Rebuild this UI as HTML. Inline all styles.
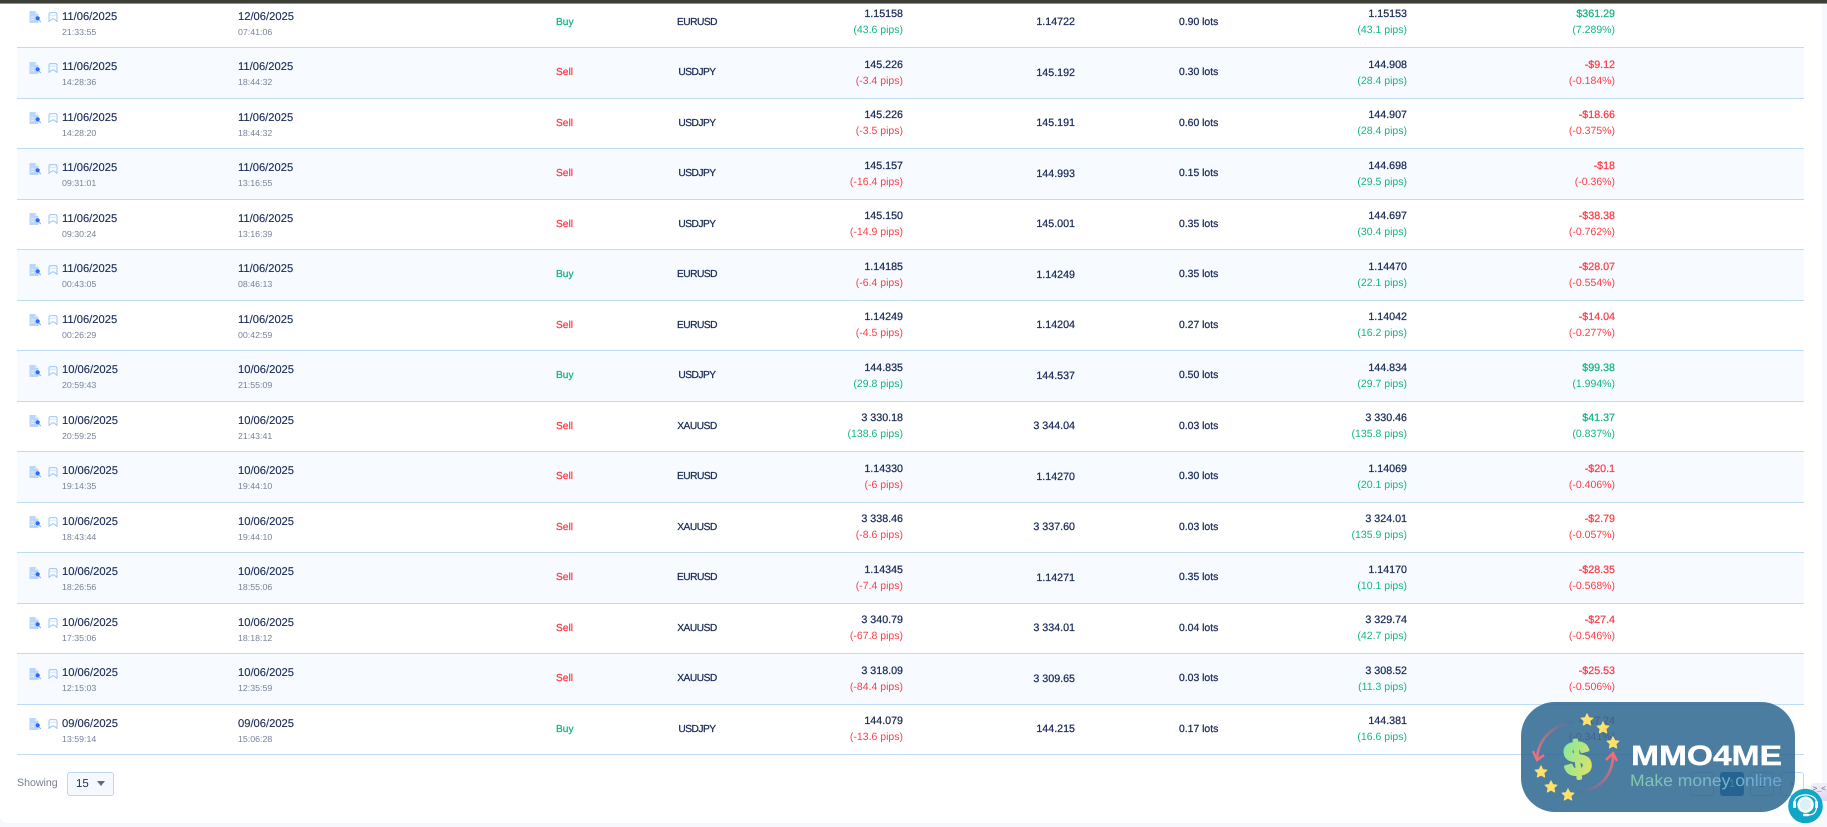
<!DOCTYPE html>
<html><head><meta charset="utf-8"><style>
html,body{margin:0;padding:0;width:1827px;height:827px;overflow:hidden;background:#f6f8fd;font-family:"Liberation Sans",sans-serif;color:#1a2a58;text-rendering:geometricPrecision}
#card{position:absolute;left:0;top:0;width:1822px;height:823px;background:#fff;border-radius:0 0 8px 8px;overflow:hidden}
#bar{position:absolute;left:0;top:0;width:1827px;height:3px;background:#3b3f35;border-bottom:1px solid #8d8f88;z-index:5}
.r{position:absolute;left:17px;width:1787px;height:50.5px;box-sizing:border-box;border-bottom:1px solid #bfdcf5}
.e{background:#f7fbff}
.r span,.r svg{position:absolute;white-space:nowrap;line-height:14px}
.i1{left:12px;top:13.5px;width:12px;height:12px}
.i2{left:31px;top:14.5px;width:10px;height:10px}
.d{left:45px;top:12px;font-size:11.2px;-webkit-text-stroke:.12px}
.c{left:221px;top:12px;font-size:11.2px;-webkit-text-stroke:.12px}
.t{left:45px;top:27px;font-size:8.8px;color:#7a8399}
.u{left:221px;top:27px;font-size:8.8px;color:#7a8399}
.s{left:539px;top:18px;font-size:10.2px;-webkit-text-stroke:.25px}
.m{left:680px;transform:translateX(-50%);top:18px;font-size:10.2px;letter-spacing:-.5px;-webkit-text-stroke:.25px;color:#1a2a58}
.o1,.o2,.c1,.c2,.p1,.p2{text-align:right}
.o1{right:901px;top:9.5px;font-size:10.7px;-webkit-text-stroke:.25px}
.o2{right:901px;top:25.5px;font-size:10.5px}
.x{right:729px;top:17.5px;font-size:10.7px;-webkit-text-stroke:.25px}
.l{left:1162px;top:18px;font-size:10.4px;-webkit-text-stroke:.25px}
.c1{right:397px;top:9.5px;font-size:10.7px;-webkit-text-stroke:.25px}
.c2{right:397px;top:25.5px;font-size:10.5px}
.p1{right:189px;top:9.5px;font-size:10.7px;-webkit-text-stroke:.25px}
.p2{right:189px;top:25.5px;font-size:10.5px}
.r .g{color:#12b584}.r .b{color:#ff3b47}
#sh{position:absolute;left:17px;top:776px;font-size:10.6px;line-height:14px;color:#77808f}
#sel{position:absolute;left:67px;top:772px;width:47px;height:24px;box-sizing:border-box;background:#f5f9ff;border:1px solid #bcd7f2;border-radius:3px}
#sel b{position:absolute;left:8px;top:4px;font-weight:normal;font-size:11.5px;line-height:14px}
#sel i{position:absolute;left:29px;top:8px;width:0;height:0;border-left:4.5px solid transparent;border-right:4.5px solid transparent;border-top:5px solid #5c6b85}
.pg{position:absolute;top:772px;width:24px;height:24px;box-sizing:border-box;border:1px solid #bcd7f2;border-radius:3px;font-size:11px;line-height:22px;text-align:center;color:#5c6b85}
#tab{position:absolute;left:1811px;top:783px;width:16px;height:18px;background:linear-gradient(#f1f0f8,#ddd4f3);border-radius:3px 0 0 3px;font-size:8px;line-height:14px;text-align:center;color:#667;font-family:"Liberation Mono",monospace;letter-spacing:-.5px}
#ov{position:absolute;left:0;top:0;z-index:8}
</style></head><body>
<svg width="0" height="0" style="position:absolute"><defs>
<symbol id="a" viewBox="0 0 12 12"><path d="M0.5 0H6.5L9.5 3V12H0.5Z" fill="#bcd6fb"/><path d="M6.5 0V3H9.5Z" fill="#e4eefd"/><path d="M2 6H5.5M2 8.5H5" stroke="#e4eefd" stroke-width="1"/><circle cx="8.7" cy="7.3" r="2.1" fill="#2c6df0"/><path d="M10 9L11.8 11" stroke="#7ea8ee" stroke-width="1"/></symbol>
<symbol id="k" viewBox="0 0 10 10"><path d="M1 9.4V2.3Q1 .6 2.7 .6H7.3Q9 .6 9 2.3V9.4L6.6 7.4Q5 6.3 3.4 7.4Z" fill="none" stroke="#9cc4f5" stroke-width="1"/><path d="M1 3.2H9" stroke="#c8dffa" stroke-width=".8"/></symbol>
</defs></svg>
<div id="card">
<div class="r" style="top:-2.5px"><svg class="i1"><use href="#a"/></svg><svg class="i2"><use href="#k"/></svg><span class="d">11/06/2025</span><span class="t">21:33:55</span><span class="c">12/06/2025</span><span class="u">07:41:06</span><span class="s g">Buy</span><span class="m">EURUSD</span><span class="o1">1.15158</span><span class="o2 g">(43.6 pips)</span><span class="x">1.14722</span><span class="l">0.90 lots</span><span class="c1">1.15153</span><span class="c2 g">(43.1 pips)</span><span class="p1 g">$361.29</span><span class="p2 g">(7.289%)</span></div>
<div class="r e" style="top:48px"><svg class="i1"><use href="#a"/></svg><svg class="i2"><use href="#k"/></svg><span class="d">11/06/2025</span><span class="t">14:28:36</span><span class="c">11/06/2025</span><span class="u">18:44:32</span><span class="s b">Sell</span><span class="m">USDJPY</span><span class="o1">145.226</span><span class="o2 b">(-3.4 pips)</span><span class="x">145.192</span><span class="l">0.30 lots</span><span class="c1">144.908</span><span class="c2 g">(28.4 pips)</span><span class="p1 b">-$9.12</span><span class="p2 b">(-0.184%)</span></div>
<div class="r" style="top:98.5px"><svg class="i1"><use href="#a"/></svg><svg class="i2"><use href="#k"/></svg><span class="d">11/06/2025</span><span class="t">14:28:20</span><span class="c">11/06/2025</span><span class="u">18:44:32</span><span class="s b">Sell</span><span class="m">USDJPY</span><span class="o1">145.226</span><span class="o2 b">(-3.5 pips)</span><span class="x">145.191</span><span class="l">0.60 lots</span><span class="c1">144.907</span><span class="c2 g">(28.4 pips)</span><span class="p1 b">-$18.66</span><span class="p2 b">(-0.375%)</span></div>
<div class="r e" style="top:149px"><svg class="i1"><use href="#a"/></svg><svg class="i2"><use href="#k"/></svg><span class="d">11/06/2025</span><span class="t">09:31:01</span><span class="c">11/06/2025</span><span class="u">13:16:55</span><span class="s b">Sell</span><span class="m">USDJPY</span><span class="o1">145.157</span><span class="o2 b">(-16.4 pips)</span><span class="x">144.993</span><span class="l">0.15 lots</span><span class="c1">144.698</span><span class="c2 g">(29.5 pips)</span><span class="p1 b">-$18</span><span class="p2 b">(-0.36%)</span></div>
<div class="r" style="top:199.5px"><svg class="i1"><use href="#a"/></svg><svg class="i2"><use href="#k"/></svg><span class="d">11/06/2025</span><span class="t">09:30:24</span><span class="c">11/06/2025</span><span class="u">13:16:39</span><span class="s b">Sell</span><span class="m">USDJPY</span><span class="o1">145.150</span><span class="o2 b">(-14.9 pips)</span><span class="x">145.001</span><span class="l">0.35 lots</span><span class="c1">144.697</span><span class="c2 g">(30.4 pips)</span><span class="p1 b">-$38.38</span><span class="p2 b">(-0.762%)</span></div>
<div class="r e" style="top:250px"><svg class="i1"><use href="#a"/></svg><svg class="i2"><use href="#k"/></svg><span class="d">11/06/2025</span><span class="t">00:43:05</span><span class="c">11/06/2025</span><span class="u">08:46:13</span><span class="s g">Buy</span><span class="m">EURUSD</span><span class="o1">1.14185</span><span class="o2 b">(-6.4 pips)</span><span class="x">1.14249</span><span class="l">0.35 lots</span><span class="c1">1.14470</span><span class="c2 g">(22.1 pips)</span><span class="p1 b">-$28.07</span><span class="p2 b">(-0.554%)</span></div>
<div class="r" style="top:300.5px"><svg class="i1"><use href="#a"/></svg><svg class="i2"><use href="#k"/></svg><span class="d">11/06/2025</span><span class="t">00:26:29</span><span class="c">11/06/2025</span><span class="u">00:42:59</span><span class="s b">Sell</span><span class="m">EURUSD</span><span class="o1">1.14249</span><span class="o2 b">(-4.5 pips)</span><span class="x">1.14204</span><span class="l">0.27 lots</span><span class="c1">1.14042</span><span class="c2 g">(16.2 pips)</span><span class="p1 b">-$14.04</span><span class="p2 b">(-0.277%)</span></div>
<div class="r e" style="top:351px"><svg class="i1"><use href="#a"/></svg><svg class="i2"><use href="#k"/></svg><span class="d">10/06/2025</span><span class="t">20:59:43</span><span class="c">10/06/2025</span><span class="u">21:55:09</span><span class="s g">Buy</span><span class="m">USDJPY</span><span class="o1">144.835</span><span class="o2 g">(29.8 pips)</span><span class="x">144.537</span><span class="l">0.50 lots</span><span class="c1">144.834</span><span class="c2 g">(29.7 pips)</span><span class="p1 g">$99.38</span><span class="p2 g">(1.994%)</span></div>
<div class="r" style="top:401.5px"><svg class="i1"><use href="#a"/></svg><svg class="i2"><use href="#k"/></svg><span class="d">10/06/2025</span><span class="t">20:59:25</span><span class="c">10/06/2025</span><span class="u">21:43:41</span><span class="s b">Sell</span><span class="m">XAUUSD</span><span class="o1">3 330.18</span><span class="o2 g">(138.6 pips)</span><span class="x">3 344.04</span><span class="l">0.03 lots</span><span class="c1">3 330.46</span><span class="c2 g">(135.8 pips)</span><span class="p1 g">$41.37</span><span class="p2 g">(0.837%)</span></div>
<div class="r e" style="top:452px"><svg class="i1"><use href="#a"/></svg><svg class="i2"><use href="#k"/></svg><span class="d">10/06/2025</span><span class="t">19:14:35</span><span class="c">10/06/2025</span><span class="u">19:44:10</span><span class="s b">Sell</span><span class="m">EURUSD</span><span class="o1">1.14330</span><span class="o2 b">(-6 pips)</span><span class="x">1.14270</span><span class="l">0.30 lots</span><span class="c1">1.14069</span><span class="c2 g">(20.1 pips)</span><span class="p1 b">-$20.1</span><span class="p2 b">(-0.406%)</span></div>
<div class="r" style="top:502.5px"><svg class="i1"><use href="#a"/></svg><svg class="i2"><use href="#k"/></svg><span class="d">10/06/2025</span><span class="t">18:43:44</span><span class="c">10/06/2025</span><span class="u">19:44:10</span><span class="s b">Sell</span><span class="m">XAUUSD</span><span class="o1">3 338.46</span><span class="o2 b">(-8.6 pips)</span><span class="x">3 337.60</span><span class="l">0.03 lots</span><span class="c1">3 324.01</span><span class="c2 g">(135.9 pips)</span><span class="p1 b">-$2.79</span><span class="p2 b">(-0.057%)</span></div>
<div class="r e" style="top:553px"><svg class="i1"><use href="#a"/></svg><svg class="i2"><use href="#k"/></svg><span class="d">10/06/2025</span><span class="t">18:26:56</span><span class="c">10/06/2025</span><span class="u">18:55:06</span><span class="s b">Sell</span><span class="m">EURUSD</span><span class="o1">1.14345</span><span class="o2 b">(-7.4 pips)</span><span class="x">1.14271</span><span class="l">0.35 lots</span><span class="c1">1.14170</span><span class="c2 g">(10.1 pips)</span><span class="p1 b">-$28.35</span><span class="p2 b">(-0.568%)</span></div>
<div class="r" style="top:603.5px"><svg class="i1"><use href="#a"/></svg><svg class="i2"><use href="#k"/></svg><span class="d">10/06/2025</span><span class="t">17:35:06</span><span class="c">10/06/2025</span><span class="u">18:18:12</span><span class="s b">Sell</span><span class="m">XAUUSD</span><span class="o1">3 340.79</span><span class="o2 b">(-67.8 pips)</span><span class="x">3 334.01</span><span class="l">0.04 lots</span><span class="c1">3 329.74</span><span class="c2 g">(42.7 pips)</span><span class="p1 b">-$27.4</span><span class="p2 b">(-0.546%)</span></div>
<div class="r e" style="top:654px"><svg class="i1"><use href="#a"/></svg><svg class="i2"><use href="#k"/></svg><span class="d">10/06/2025</span><span class="t">12:15:03</span><span class="c">10/06/2025</span><span class="u">12:35:59</span><span class="s b">Sell</span><span class="m">XAUUSD</span><span class="o1">3 318.09</span><span class="o2 b">(-84.4 pips)</span><span class="x">3 309.65</span><span class="l">0.03 lots</span><span class="c1">3 308.52</span><span class="c2 g">(11.3 pips)</span><span class="p1 b">-$25.53</span><span class="p2 b">(-0.506%)</span></div>
<div class="r" style="top:704.5px"><svg class="i1"><use href="#a"/></svg><svg class="i2"><use href="#k"/></svg><span class="d">09/06/2025</span><span class="t">13:59:14</span><span class="c">09/06/2025</span><span class="u">15:06:28</span><span class="s g">Buy</span><span class="m">USDJPY</span><span class="o1">144.079</span><span class="o2 b">(-13.6 pips)</span><span class="x">144.215</span><span class="l">0.17 lots</span><span class="c1">144.381</span><span class="c2 g">(16.6 pips)</span><span class="p1 b">-$17.24</span><span class="p2 b">(-0.341%)</span></div>
<div id="sh">Showing</div>
<div id="sel"><b>15</b><i></i></div>
<div class="pg" style="left:1690px"></div>
<div class="pg" style="left:1720px;background:#00589c;border-color:#00589c;color:#fff">1</div>
<div class="pg" style="left:1750px">2</div>
<div class="pg" style="left:1780px">›</div>
</div>
<div id="bar"></div>
<div id="tab">&gt;_&lt;</div>
<svg id="ov" width="1827" height="827" viewBox="0 0 1827 827" font-family="'Liberation Sans',sans-serif">
<defs>
<linearGradient id="dg" x1="0" y1="0" x2="1" y2="1"><stop offset="0" stop-color="#78eaa6"/><stop offset="1" stop-color="#ebe25f"/></linearGradient>
<linearGradient id="tg" x1="0" y1="0" x2="1" y2="0"><stop offset="0" stop-color="#86c9ae"/><stop offset="1" stop-color="#69a6dc"/></linearGradient>
<linearGradient id="la" gradientUnits="userSpaceOnUse" x1="1573" y1="722" x2="1537" y2="759"><stop offset="0" stop-color="#47779f"/><stop offset="1" stop-color="#ee6f80"/></linearGradient>
<linearGradient id="ra" gradientUnits="userSpaceOnUse" x1="1578" y1="792" x2="1613" y2="755"><stop offset="0" stop-color="#47779f"/><stop offset="1" stop-color="#f46b7c"/></linearGradient>
<path id="st" d="M0-6.2L1.8-2.4 5.9-1.9 2.9.9 3.7 5 0 3-3.7 5-2.9.9-5.9-1.9-1.8-2.4Z" fill="#ffe168" stroke="#ffe168" stroke-width="1" stroke-linejoin="round"/>
</defs>
<rect x="1521" y="702" width="274" height="110" rx="34" fill="#2c6690" fill-opacity=".85"/>
<path d="M1573 722C1552 725 1538 740 1537 759" fill="none" stroke="url(#la)" stroke-width="2.6"/>
<path d="M1533 751L1537 760 1544 755" fill="none" stroke="#ee6f80" stroke-width="2.4"/>
<path d="M1578 792C1600 790 1613 775 1613 755" fill="none" stroke="url(#ra)" stroke-width="2.6"/>
<path d="M1606 760L1613 753 1617 761" fill="none" stroke="#f46b7c" stroke-width="2.4"/>
<text x="1577" y="775" font-size="47" font-weight="bold" text-anchor="middle" fill="url(#dg)" stroke="url(#dg)" stroke-width="3" stroke-linejoin="round" transform="rotate(-6 1577 757)">$</text>
<use href="#st" x="1587" y="720"/><use href="#st" x="1603" y="728"/><use href="#st" x="1613" y="743"/><use href="#st" x="1541" y="772"/><use href="#st" x="1551" y="787"/><use href="#st" x="1568" y="795"/>
<text x="1631" y="765" font-size="28" font-weight="bold" fill="#fff" stroke="#fff" stroke-width=".4" textLength="151" lengthAdjust="spacingAndGlyphs">MMO4ME</text>
<text x="1630" y="786" font-size="16.5" fill="url(#tg)" textLength="152" lengthAdjust="spacingAndGlyphs">Make money online</text>
<circle cx="1805.5" cy="806" r="17.3" fill="#10a6c8"/>
<circle cx="1805.5" cy="804.7" r="7" fill="#d9f1f7" stroke="#fff" stroke-width="2.4"/>
<path d="M1794.5 806V802C1795 792.5 1816 792.5 1816.5 802V806" fill="none" stroke="#fff" stroke-width="1.3"/>
<rect x="1793" y="801" width="3" height="7" rx="1.3" fill="#fff"/><rect x="1815" y="801" width="3" height="7" rx="1.3" fill="#fff"/>
<path d="M1816.5 808Q1815.5 815 1808 815" fill="none" stroke="#fff" stroke-width="1.2"/>
<rect x="1803" y="813.8" width="6" height="2.4" rx="1" fill="#fff"/>
</svg>
</body></html>
